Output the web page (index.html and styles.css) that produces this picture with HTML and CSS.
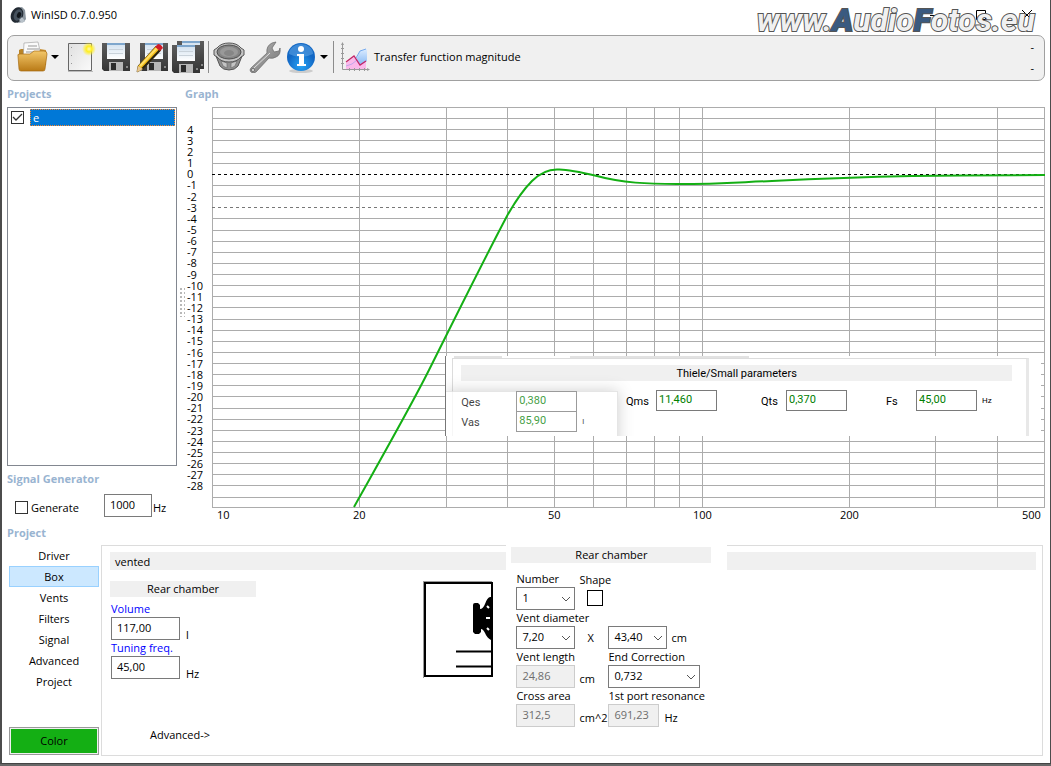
FILE: index.html
```html
<!DOCTYPE html>
<html lang="en">
<head>
<meta charset="utf-8">
<title>WinISD 0.7.0.950</title>
<link rel="stylesheet" href="styles.css">
</head>
<body>
<div class="window">
  <header class="titlebar">
    <svg class="app-icon" viewBox="0 0 16 16"><path d="M7 1l5-1 3 3 1 9-2 3-7 1z" fill="#8b959e"/><ellipse cx="7" cy="8" rx="6" ry="8" transform="rotate(22 7 8)" fill="#222a33"/><ellipse cx="8" cy="8" rx="4" ry="6" transform="rotate(22 8 8)" fill="#46525e"/><ellipse cx="9" cy="8" rx="2" ry="3" transform="rotate(22 9 8)" fill="#11161b"/><path d="M9 13l3-3 3 4-3 2z" fill="#b9c2ca"/></svg>
    <h1 class="title">WinISD 0.7.0.950</h1>
    <div class="window-controls">
      <button type="button" aria-label="Minimize"><svg viewBox="0 0 10 10"><path d="M0 5.500h10"/></svg></button>
      <button type="button" aria-label="Maximize"><svg viewBox="0 0 10 10"><path d="M.5.5h9v9h-9z"/></svg></button>
      <button type="button" aria-label="Close"><svg viewBox="0 0 10 10"><path d="M0 0l10 10M10 0L0 10"/></svg></button>
    </div>
    <div class="watermark">www.<b>A</b>udio<b>F</b>otos.eu</div>
  </header>

  <nav class="toolbar">
    <button type="button" class="tool" aria-label="Open"><svg viewBox="0 0 32 32"><defs><linearGradient id="fold" x2="0" y2="1"><stop stop-color="#f3c76a"/><stop offset="1" stop-color="#b97a16"/></linearGradient></defs><path d="M3 9l2-1h5v16H3z" fill="#b98428"/><path d="M8 2l14-1 4 18H7z" fill="#fafafa" stroke="#999" stroke-width=".6"/><path d="M12 5h9M11 8h12M10 11h13" stroke="#999"/><path d="M24 8l6 1v15h-6z" fill="#c9943a"/><path d="M2 15q-1-2 2-2h10l4-3h10q3 0 3 3l-2 15q0 2-2 2H5q-2 0-2-2z" fill="url(#fold)" stroke="#a86c12" stroke-width=".7"/></svg></button>
    <button type="button" class="drop" aria-label="Recent files"><svg viewBox="0 0 8 5"><path d="M0 0h8L4 4z"/></svg></button>
    <button type="button" class="tool" aria-label="New"><svg viewBox="0 0 32 32"><defs><radialGradient id="sun"><stop stop-color="#fffbb0"/><stop offset=".4" stop-color="#ffee22"/><stop offset="1" stop-color="#ffee22" stop-opacity="0"/></radialGradient><linearGradient id="sheet" x2="1" y2="1"><stop stop-color="#e0e0e0"/><stop offset="1" stop-color="#fafafa"/></linearGradient></defs><path d="M4.500 2.500h23v27h-23z" fill="url(#sheet)" stroke="#666"/><path d="M4 30.500h25" stroke="#bbb"/><path d="M7.500 6v20" stroke="#999" stroke-dasharray="1 7"/><circle cx="25" cy="8" r="7" fill="url(#sun)"/></svg></button>
    <button type="button" class="tool" aria-label="Save"><svg viewBox="0 0 32 32"><defs><linearGradient id="lab" x2="0" y2="1"><stop stop-color="#cfdfee"/><stop offset="1" stop-color="#fff"/></linearGradient><linearGradient id="case" x2="0" y2="1"><stop stop-color="#5c5c5c"/><stop offset="1" stop-color="#343434"/></linearGradient><g id="disk"><path d="M2 2h28v28H4l-2-2z" fill="url(#case)"/><path d="M7 2h18v16H7z" fill="url(#lab)"/><path d="M7 2h18v2H7z" fill="#7ea6cc"/><path d="M9 8.500h14M9 12.500h14" stroke="#c9d2da"/><path d="M9 21h14v9H9z" fill="#b8b8b8"/><path d="M11 22h5v7h-5z" fill="#2b2b2b"/><path d="M26 25h2v2h-2z" fill="#888"/></g></defs><use href="#disk"/></svg></button>
    <button type="button" class="tool" aria-label="Save as"><svg viewBox="0 0 32 32"><use href="#disk" x="2"/><path d="M2 25L20 5l5 4L7 28l-6 3z" fill="#f3bd18" stroke="#553b08" stroke-width=".7"/><path d="M4 25L21 7" stroke="#ffe06a" stroke-width="2"/><path d="M6 28L24 9" stroke="#2b2410" stroke-width="2"/><path d="M19 6l3-3q3 0 5 4l-3 3z" fill="#d01c28"/><path d="M2 25l5 3-6 3z" fill="#e8c894"/></svg></button>
    <button type="button" class="tool" aria-label="Save all"><svg viewBox="0 0 32 32"><use href="#disk" x="3" y="-2"/><use href="#disk" x="-2" y="2"/></svg></button>
    <span class="separator"></span>
    <button type="button" class="tool" aria-label="Drivers"><svg viewBox="0 0 32 32"><path d="M3 15l4 10q3 4 9 4t9-4l4-10z" fill="#8f8f8f" stroke="#555"/><path d="M8 20l2 5 4 2v-5zM18 22v5l4-2 2-5z" fill="#c4c4c4" stroke="#666" stroke-width=".6"/><path d="M1 9l3-2q4-5 12-5t12 5l3 2v5l-3 2q-4 5-12 5T4 16l-3-2z" fill="#c4c4c4" stroke="#555"/><ellipse cx="16" cy="11" rx="12" ry="7" fill="#848484" stroke="#505050"/><ellipse cx="16" cy="11" rx="9" ry="5" fill="#999"/><ellipse cx="16" cy="12" rx="5" ry="3" fill="#868686"/></svg></button>
    <button type="button" class="tool" aria-label="Options"><svg viewBox="0 0 32 32"><defs><linearGradient id="steel" x2="1" y2="1"><stop stop-color="#bbb"/><stop offset="1" stop-color="#707070"/></linearGradient></defs><path d="M2 27L18 12q-1-7 5-10l4-1-4 6 2 4 5-1 1-3q1 7-4 9-3 2-7 1L7 31q-3 2-5 0-2-2 0-4z" fill="url(#steel)" stroke="#707070" stroke-width=".8"/><path d="M5 27L21 12" stroke="#ddd"/><circle cx="4" cy="29" r="1.500" fill="#eee" stroke="#555" stroke-width=".7"/></svg></button>
    <button type="button" class="tool" aria-label="About"><svg viewBox="0 0 32 32"><defs><radialGradient id="blue" cy=".8"><stop stop-color="#27a4f6"/><stop offset="1" stop-color="#1267c4"/></radialGradient></defs><ellipse cx="16" cy="30" rx="12" ry="2" fill="#ccc"/><circle cx="16" cy="16" r="14" fill="url(#blue)"/><path d="M4 13a12 10 0 0 1 24 0q-12 6-24 0z" fill="#7dbdf2" opacity=".4"/><circle cx="16" cy="8" r="3" fill="#fff"/><path d="M12 13h7v10h2v2h-9v-2h2v-8h-2z" fill="#fff"/></svg></button>
    <button type="button" class="drop" aria-label="Help menu"><svg viewBox="0 0 8 5"><path d="M0 0h8L4 4z"/></svg></button>
    <span class="separator"></span>
    <button type="button" class="chart-type"><svg viewBox="0 0 30 30"><defs><linearGradient id="bf" x2="0" y2="1"><stop stop-color="#dcecff"/><stop offset="1" stop-color="#86b8f4"/></linearGradient></defs><path d="M15 18l4-9 7-2v12l-6 4z" fill="url(#bf)"/><path d="M5 21l8-6 6 8 6-3v7H5z" fill="#fbb8ea"/><path d="M15 16l4-7 6-2" fill="none" stroke="#72a9ef"/><path d="M5 24l6-2 5-4" fill="none" stroke="#c2a5ec"/><path d="M5 20l8-6 6 9 6-4" fill="none" stroke="#c32467" stroke-width="1.300"/><path d="M1.500 2v25.500H28M0 6.500h3M0 11.500h3M0 16.500h3M0 21.500h3M8.500 26v3M13.500 26v3M18.500 26v3M23.500 26v3" fill="none" stroke="#999"/><path d="M0 3l1.500-3L3 3zM26 26l3 1.500-3 1.500z" fill="#999"/></svg><span>Transfer function magnitude</span></button>
    <span class="dashes"><span>-</span><span>-</span></span>
  </nav>

  <main class="workspace">
    <aside class="sidebar">
      <h2 class="heading">Projects</h2>
      <ul class="project-list">
        <li><input type="checkbox" class="check" id="proj-e" checked><label for="proj-e">e</label></li>
      </ul>
      <h2 class="heading">Signal Generator</h2>
      <div class="generator">
        <input type="checkbox" class="check" id="gen"><label for="gen">Generate</label>
        <input class="field" id="gen-freq" value="1000" aria-label="Frequency"><label class="unit" for="gen-freq">Hz</label>
      </div>
    </aside>
    <div class="splitter"></div>
    <section class="graph">
      <h2 class="heading">Graph</h2>
      <div class="y-axis">
        <span>4</span><span>3</span><span>2</span><span>1</span><span>0</span><span>-1</span><span>-2</span><span>-3</span><span>-4</span><span>-5</span><span>-6</span><span>-7</span><span>-8</span><span>-9</span><span>-10</span><span>-11</span><span>-12</span><span>-13</span><span>-14</span><span>-15</span><span>-16</span><span>-17</span><span>-18</span><span>-19</span><span>-20</span><span>-21</span><span>-22</span><span>-23</span><span>-24</span><span>-25</span><span>-26</span><span>-27</span><span>-28</span>
      </div>
      <div class="plot">
        <svg class="plot-svg" viewBox="0 0 833 401" preserveAspectRatio="none">
          <path class="grid-line" d="M0 .5h833M0 11.500h833M0 22.500h833M0 33.500h833M0 45.500h833M0 56.500h833M0 78.500h833M0 89.500h833M0 111.500h833M0 123.500h833M0 134.500h833M0 145.500h833M0 156.500h833M0 167.500h833M0 178.500h833M0 189.500h833M0 200.500h833M0 212.500h833M0 223.500h833M0 234.500h833M0 245.500h833M0 256.500h833M0 267.500h833M0 278.500h833M0 289.500h833M0 301.500h833M0 312.500h833M0 323.500h833M0 334.500h833M0 345.500h833M0 356.500h833M0 367.500h833M0 378.500h833M0 390.500h833M0 400.500h833"/>
          <path class="grid-line" d="M.5 0v401M147.500 0v401M234.500 0v401M295.500 0v401M342.500 0v401M381.500 0v401M414.500 0v401M442.500 0v401M467.500 0v401M490.500 0v401M637.500 0v401M723.500 0v401M785.500 0v401M832.500 0v401"/>
          <path class="zero-line" d="M0 67.500h833"/>
          <path class="cutoff-line" d="M0 100.500h833"/>
          <path class="curve" d="M142 400L147 391C175 341 200 297 217 263L235 227C248 201 276 145 295 109C304 93 312 82 320 74Q332 62 346 62.500Q356 62 385 69C410 76 436 77 465 77C510 77 530 75 560 74C600 72 650 70 700 69L750 68.500L833 68"/>
        </svg>
        <form class="ts-panel">
          <div class="ts-tabs"><span></span><span></span></div>
          <div class="ts-body">
            <h3 class="ts-title">Thiele/Small parameters</h3>
            <div class="ts-main">
              <div class="ts-row"><label for="qms">Qms</label><input id="qms" value="11,460"></div>
              <div class="ts-row"><label class="near" for="qts">Qts</label><input id="qts" value="0,370"></div>
              <div class="ts-row"><label for="fs">Fs</label><input id="fs" value="45,00"><span class="small-unit">Hz</span></div>
            </div>
          </div>
          <div class="ts-popup">
            <div class="ts-row"><label for="qes">Qes</label><input id="qes" value="0,380"></div>
            <div class="ts-row"><label for="vas">Vas</label><input id="vas" value="85,90"><span class="small-unit">l</span></div>
          </div>
        </form>
      </div>
      <div class="x-axis"><span>10</span><span>20</span><span>50</span><span>100</span><span>200</span><span>500</span></div>
    </section>
  </main>

  <section class="project">
    <div class="project-nav">
      <h2 class="heading">Project</h2>
      <button type="button" class="tab">Driver</button>
      <button type="button" class="tab active">Box</button>
      <button type="button" class="tab">Vents</button>
      <button type="button" class="tab">Filters</button>
      <button type="button" class="tab">Signal</button>
      <button type="button" class="tab">Advanced</button>
      <button type="button" class="tab">Project</button>
      <button type="button" class="color-button">Color</button>
    </div>
    <form class="panel">
      <div class="box-pane">
        <h3 class="band">vented</h3>
        <div class="box-content">
          <div class="chamber">
            <h4 class="band centered">Rear chamber</h4>
            <label class="blue" for="volume">Volume</label>
            <div class="value-row"><input class="field" id="volume" value="117,00"><span>l</span></div>
            <label class="blue" for="tuning">Tuning freq.</label>
            <div class="value-row"><input class="field" id="tuning" value="45,00"><span>Hz</span></div>
            <button type="button" class="advanced">Advanced-&gt;</button>
          </div>
          <svg class="box-drawing" viewBox="0 0 70 97"><path d="M0 0h69v1H1v96H0z" fill="#999"/><path d="M2 2h67v93H2z" fill="#fff" stroke="#000" stroke-width="2"/><path d="M50 24q0-2 2-2h3l2 2v4q3 0 5-5 2-6 5-7h3v43h-2q-4-2-6-7-2-4-4-4v3l-2 2h-4l-2-2z"/><path d="M70 70.500H33M70 85.500H33" stroke="#000" stroke-width="2"/><path d="M64 25l2 2M63 37h4M64 47l2 2" stroke="#fff" stroke-width="2"/></svg>
        </div>
      </div>
      <div class="vent-pane">
        <h3 class="band centered">Rear chamber</h3>
        <div class="vent-grid">
          <label for="number">Number</label><label class="shape-label" for="shape">Shape</label>
          <select class="field" id="number"><option>1</option></select><button type="button" class="shape" id="shape" aria-label="Shape"></button>
          <label class="wide" for="diameter">Vent diameter</label>
          <select class="field" id="diameter"><option>7,20</option></select><span class="times">X</span>
          <select class="field" id="width" aria-label="Vent width"><option>43,40</option></select><span class="side-unit">cm</span>
          <label class="first" for="length">Vent length</label><label class="second" for="correction">End Correction</label>
          <input class="field" id="length" value="24,86" disabled><span class="unit">cm</span>
          <select class="field second" id="correction"><option>0,732</option></select>
          <label class="first" for="area">Cross area</label><label class="second" for="resonance">1st port resonance</label>
          <input class="field" id="area" value="312,5" disabled><span class="unit">cm^2</span>
          <span class="second resonance"><input class="field" id="resonance" value="691,23" disabled><span>Hz</span></span>
        </div>
      </div>
      <div class="rest-pane"><div class="band"></div></div>
    </form>
  </section>
</div>
</body>
</html>
```

FILE: styles.css
```css
* { box-sizing: border-box; }

body {
  margin: 0;
  background: #686868;
  color: #000;
  font: 11px/16px "Open Sans", "Noto Sans", sans-serif;
}

button, input, select { font: inherit; color: inherit; }
button { padding: 0; border: 0; background: none; }
h1, h2, h3, h4, ul { margin: 0; padding: 0; font-size: 11px; font-weight: 400; list-style: none; }

.window {
  display: flex;
  flex-direction: column;
  min-height: calc(100vh - 2px);
  border-left: 2px solid #4c4c4c;
  border-right: 1px solid #4c4c4c;
  border-bottom: 1px solid #444;
  background: #fff;
}

/* Title bar */
.titlebar { position: relative; display: flex; align-items: center; height: 35px; padding: 0 18px 6px 8px; }
.app-icon { width: 16px; height: 16px; margin-right: 5px; }
.title { flex: 1; }
.window-controls { display: flex; gap: 36px; }
.window-controls svg { display: block; width: 10px; height: 10px; fill: none; stroke: #000; }
.watermark {
  position: absolute;
  right: 15px;
  top: 2px;
  color: #f0f0f0;
  font: italic 700 32px/36px Roboto, sans-serif;
  -webkit-text-stroke: 2px #555;
  paint-order: stroke fill;
}
.watermark b { color: #3a5a80; }

/* Toolbar */
.toolbar {
  display: flex;
  align-items: center;
  height: 46px;
  margin: 0 5px;
  padding: 0 10px 2px 8px;
  border: 1px solid #a0a0a0;
  border-radius: 7px;
  background: #f0f0f0;
}
.tool { width: 32px; height: 32px; margin-right: 4px; }
.tool svg { display: block; width: 32px; height: 32px; }
.drop { width: 8px; margin: 0 5px 0 0; }
.drop svg { display: block; width: 8px; height: 5px; }
.tool:has(+ .drop) { margin-right: 3px; }
.separator { width: 1px; height: 32px; margin-right: 4px; background: #8c8c8c; }
.chart-type { display: flex; align-items: center; gap: 3px; margin-left: 3px; }
.chart-type svg { width: 30px; height: 30px; }
.dashes { display: flex; flex-direction: column; gap: 5px; margin-left: auto; }

/* Upper workspace */
.heading { height: 26px; color: #99b4d1; font-weight: 700; line-height: 26px; }
.workspace { flex: 1; display: flex; padding: 0 5px; }
.sidebar { display: flex; flex-direction: column; width: 170px; }
.project-list { flex: 1; padding: 1px 1px 2px 2px; border: 1px solid #828790; }
.project-list li { display: flex; gap: 6px; align-items: center; }
.project-list label {
  flex: 1;
  height: 17px;
  padding: 0 2px;
  border: 1px dotted #ff8728;
  background: #0078d7;
  color: #fff;
}
.check {
  appearance: none;
  width: 13px;
  height: 13px;
  margin: 0 0 0 1px;
  border: 1px solid #333;
  background: #fff;
}
.check:checked {
  background: #fff url("data:image/svg+xml,%3Csvg xmlns='http://www.w3.org/2000/svg' viewBox='0 0 11 11'%3E%3Cpath d='M1 5l3 3 6-6' fill='none' stroke='%23333' stroke-width='1.3'/%3E%3C/svg%3E");
}
.generator { display: flex; align-items: center; gap: 3px; height: 30px; padding: 1px 0 0 7px; }
.generator .field { width: 48px; margin: -4px 0 0 auto; }
.generator .unit { width: 24px; margin-left: -2px; }

.field {
  width: 100%;
  height: 23px;
  padding: 0 5px 2px;
  border: 1px solid #7a7a7a;
  border-radius: 0;
  background: #fff;
}
.field:disabled { border-color: #ccc; background: #f0f0f0; color: #6d6d6d; }
select.field {
  appearance: none;
  background: #fff url("data:image/svg+xml,%3Csvg xmlns='http://www.w3.org/2000/svg' viewBox='0 0 10 6'%3E%3Cpath d='M1 1l4 4 4-4' fill='none' stroke='%23555'/%3E%3C/svg%3E") no-repeat right 3px center / 10px 6px;
}

.splitter {
  align-self: center;
  width: 6px;
  height: 30px;
  margin: 0 0 0 2px;
  background: radial-gradient(circle, #b8b8b8 1px, transparent 1px) 0 0 / 4px 4px;
}

.graph {
  flex: 1;
  display: grid;
  grid-template: 26px 1fr 14px / 27px 1fr;
}
.graph .heading { grid-column: 1 / 3; }
.y-axis {
  display: flex;
  flex-direction: column;
  padding-left: 2px;
  line-height: 11px;
}
.y-axis::before, .y-axis::after { content: ""; flex: 3 0 0; }
.y-axis span { flex: 2 0 0; }
.plot { position: relative; min-height: 401px; }
.plot-svg { position: absolute; width: 100%; height: 100%; }
.plot-svg path { fill: none; vector-effect: non-scaling-stroke; }
.plot-svg .grid-line { stroke: #acacac; }
.plot-svg .zero-line { stroke: #000; stroke-dasharray: 3 3; }
.plot-svg .cutoff-line { stroke: #777; stroke-dasharray: 3 3; }
.plot-svg .curve { stroke: #14af14; stroke-width: 2; }
.x-axis {
  grid-column: 2;
  display: grid;
  grid-template-columns: 136fr 195fr 145fr 147fr 182fr 23fr;
  padding-left: 5px;
  line-height: 14px;
}

/* Thiele/Small overlay */
.ts-panel {
  position: absolute;
  left: 28%;
  right: 4px;
  top: 249px;
  height: 80px;
  overflow: hidden;
  border-left: 1px solid #777;
  background: #fff;
  font: 11px/14px Roboto, "Liberation Sans", sans-serif;
}
.ts-tabs { display: flex; gap: 68px; height: 2px; padding-left: 8px; }
.ts-tabs span { width: 48px; background: #e2e2e2; }
.ts-tabs span + span { width: 179px; }
.ts-body { height: 80px; margin: 0 12px 0 6px; padding: 6px 14px 0 8px; border: 1px solid #dcdcdc; border-right: 3px solid #e8e8e8; }
.ts-title { height: 16px; background: #f0f0f0; line-height: 17px; text-align: center; }
.ts-main { display: grid; grid-template-columns: 130px 130px 130px; justify-content: end; padding-top: 9px; margin-right: -4px; }
.ts-row { display: flex; align-items: center; }
.ts-row label { width: 30px; padding-top: 3px; }
.ts-row .near { width: 25px; margin-left: 5px; }
.ts-row input {
  width: 61px;
  height: 21px;
  padding: 0 2px 2px;
  border: 1px solid #7a7a7a;
  background: #fff;
  color: #008000;
}
.small-unit { padding-left: 5px; font-size: 8px; }
.ts-popup {
  position: absolute;
  left: 0;
  top: 35px;
  width: 172px;
  height: 60px;
  padding-left: 15px;
  border: 1px solid #ddd;
  border-left: 0;
  background: #fff;
  box-shadow: 0 0 14px #00000040;
  opacity: .75;
}
.ts-popup label { width: 55px; }
.ts-popup .ts-row { margin-top: -1px; }

/* Project section */
.project { display: flex; padding: 0 7px 7px 5px; }
.project-nav { display: flex; flex-direction: column; width: 94px; }
.project-nav .heading { height: 23px; line-height: 22px; }
.tab { height: 21px; margin: 0 2px; border: 1px solid transparent; line-height: 19px; }
.tab.active { border-color: #99d1ff; background: #cce8ff; }
.color-button {
  height: 28px;
  margin: auto 2px 1px;
  border: 1px solid #999;
  background: #14af14;
  box-shadow: inset 0 0 0 1px #f0f0f0;
}
.panel {
  flex: 1;
  display: grid;
  grid-template-columns: 405fr 221px 315fr;
  margin-top: 23px;
  border: solid #dcdcdc;
  border-width: 0 1px 1px;
}
.box-pane, .rest-pane { border-top: 1px solid #dcdcdc; }
.band { height: 18px; background: #f0f0f0; line-height: 19px; }
.band.centered { height: 16px; line-height: 16px; text-align: center; }
.box-pane { padding: 6px 0 12px 8px; }
.box-pane > .band { padding-left: 5px; }
.box-content { display: flex; justify-content: space-between; padding: 11px 13px 0 0; }
.chamber { display: flex; flex-direction: column; width: 146px; }
.chamber label { height: 16px; padding-left: 1px; }
.chamber .band { margin-bottom: 4px; }
.blue { color: #00f; }
.value-row { display: flex; align-items: flex-end; gap: 6px; height: 23px; padding-left: 1px; }
.value-row .field { width: 69px; }
.value-row span { height: 13px; }
.advanced { margin: 48px 0 0 40px; align-self: flex-start; line-height: 16px; }
.box-drawing { width: 70px; height: 97px; }

.vent-pane { padding: 2px 16px 0 5px; }
.vent-grid {
  display: grid;
  grid-template-columns: 59px 33px 59px 33px;
  grid-template-rows: repeat(4, 16px 23px);
  padding: 8px 0 0 5px;
  white-space: nowrap;
}
.vent-grid .first { grid-column: 1; }
.vent-grid .second { grid-column: 3 / 5; }
.vent-grid .shape-label { grid-column: 2 / 5; padding-left: 4px; line-height: 18px; }
.shape { grid-column: 2 / 5; width: 16px; height: 16px; margin: 3px 0 0 12px; border: 1px solid #000; }
.vent-grid .wide { grid-column: 1 / 5; }
.times, .side-unit, .vent-grid .unit { padding-top: 4px; }
.times { padding-left: 12px; }
.side-unit, .vent-grid .unit { padding-left: 4px; }
.vent-grid .unit { padding-top: 6px; }
.resonance { display: flex; gap: 5px; }
.resonance .field { width: 51px; }
.resonance span { padding-top: 6px; }
.rest-pane { padding: 6px 6px 0 0; }
```
